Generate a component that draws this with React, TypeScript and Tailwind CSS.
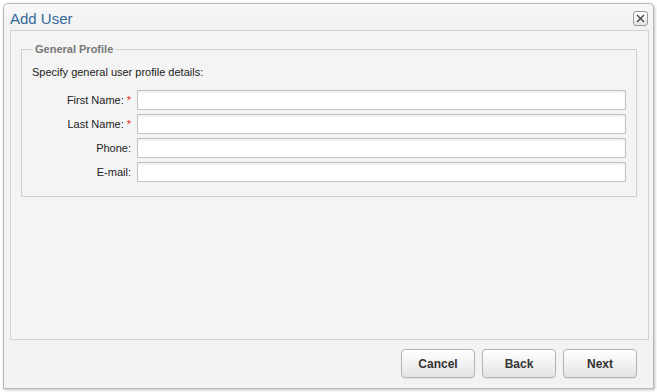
import React from 'react'

const fields = [
  { label: 'First Name:', required: true },
  { label: 'Last Name:', required: true },
  { label: 'Phone:', required: false },
  { label: 'E-mail:', required: false },
]

export default function App() {
  return (
    <div className="w-[657px] h-[392px] bg-white pt-[3px] pl-[3px] font-['Liberation_Sans',Arial,sans-serif]">
      <div className="w-[651px] h-[386px] flex flex-col border border-[#b9b9b9] rounded-t-[5px] bg-[#f3f3f3] shadow-[1px_1px_3px_rgba(0,0,0,0.25)]">
        {/* title bar */}
        <div className="h-[26px] flex items-center justify-between pl-[6px] pr-[5px] bg-gradient-to-b from-[#f8f8f8] to-[#f1f1f1] rounded-t-[5px]">
          <span className="text-[15px] leading-none text-[#33699c] mt-[2px]">Add User</span>
          <button className="w-[15px] h-[15px] flex items-center justify-center border border-[#9a9a9a] rounded-[3px] bg-gradient-to-b from-white to-[#e6e6e6] mt-[2px]">
            <svg width="9" height="9" viewBox="0 0 9 9">
              <path d="M1 1L8 8M8 1L1 8" stroke="#444" strokeWidth="1.4" />
            </svg>
          </button>
        </div>

        {/* content panel */}
        <div className="ml-[6px] w-[639px] h-[310px] border border-[#d3d3d3] bg-[#f4f4f4] pt-[12px]">
          <fieldset className="ml-[10px] w-[616px] border border-[#cfcfcf] px-[10px] pb-[14px]">
            <legend className="ml-[1px] px-[2px] text-[11px] leading-[13px] font-bold text-[#777]">General Profile</legend>
            <p className="mt-[10px] text-[11px] leading-[13px] text-[#222]">Specify general user profile details:</p>
            <div className="mt-[11px] flex flex-col gap-[4px]">
              {fields.map((f) => (
                <div key={f.label} className="flex items-center">
                  <label className="w-[100px] -ml-[1px] text-right text-[11px] text-[#222]">
                    {f.label}
                    {f.required && <span className="ml-[3px] text-[#d22]">*</span>}
                  </label>
                  <input
                    type="text"
                    className="ml-[6px] w-[489px] h-[20px] border border-[#c2c2c2] bg-white shadow-[inset_0_2px_2px_rgba(0,0,0,0.06)] outline-none"
                  />
                </div>
              ))}
            </div>
          </fieldset>
        </div>

        {/* footer */}
        <div className="flex justify-end gap-[7px] pt-[9px] pr-[16px]">
          {['Cancel', 'Back', 'Next'].map((b) => (
            <button
              key={b}
              className="w-[74px] h-[29px] rounded-[4px] border border-[#b3b3b3] bg-gradient-to-b from-white to-[#e4e4e4] text-[12px] font-bold text-[#333] shadow-[0_1px_1px_rgba(0,0,0,0.08)]"
            >
              {b}
            </button>
          ))}
        </div>
      </div>
    </div>
  )
}
